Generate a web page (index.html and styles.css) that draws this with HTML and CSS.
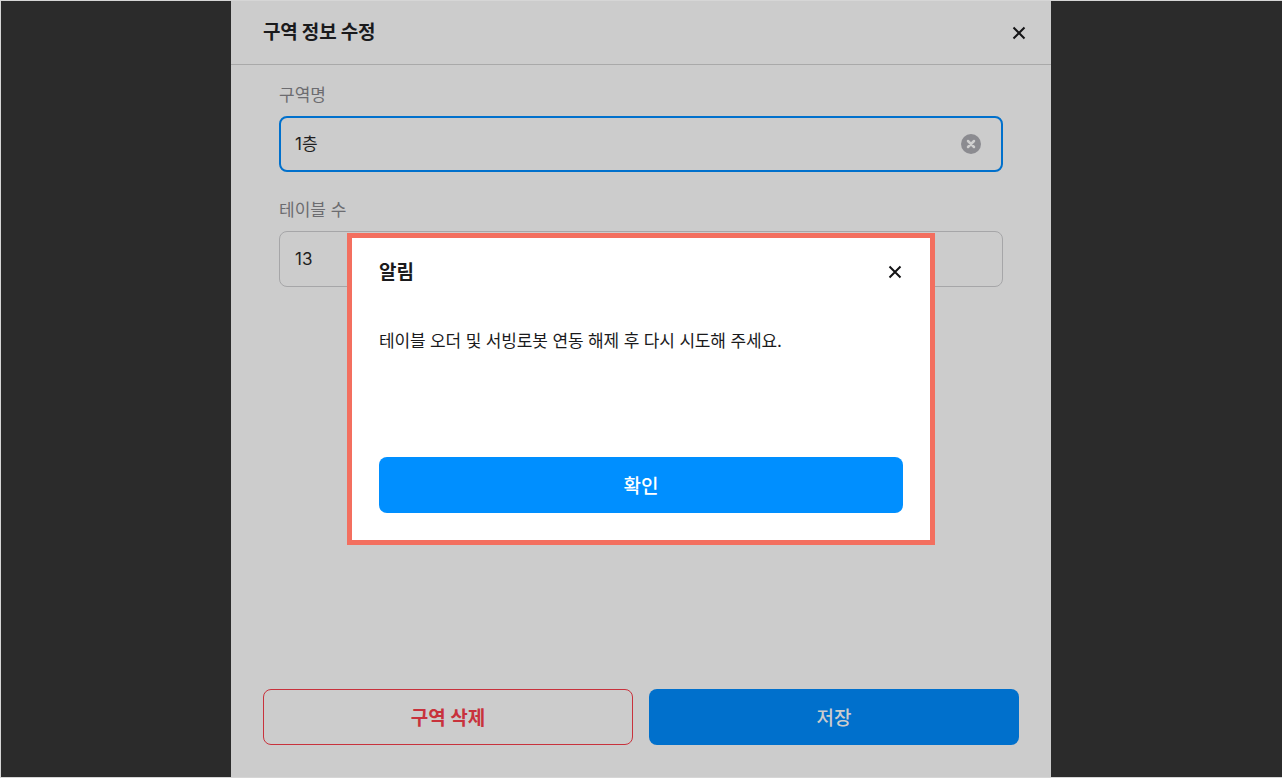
FILE: index.html
```html
<!DOCTYPE html>
<html lang="ko">
<head>
<meta charset="utf-8">
<title>구역 정보 수정</title>
<link rel="stylesheet" href="styles.css">
</head>
<body>
<div class="app">
  <section class="panel">
    <header class="panel-head">
      <h1 class="panel-title">구역 정보 수정</h1>
      <svg class="close-icon" viewBox="0 0 14 14"><path d="M1.5 1.5l11 11M12.5 1.5l-11 11"/></svg>
    </header>
    <div class="panel-body">
      <div class="field">
        <label class="field-label">구역명</label>
        <div class="input input-focus">
          <span class="input-value">1층</span>
          <svg class="clear-icon" viewBox="0 0 20 20"><circle cx="10" cy="10" r="10" fill="#8b8b90"/><path d="M7 7l6 6M13 7l-6 6" stroke="#cfcfcf" stroke-width="2.5" stroke-linecap="round"/></svg>
        </div>
      </div>
      <div class="field">
        <label class="field-label">테이블 수</label>
        <div class="input"><span class="input-value">13</span></div>
      </div>
    </div>
    <footer class="panel-foot">
      <button class="btn btn-danger">구역 삭제</button>
      <button class="btn btn-save">저장</button>
    </footer>
  </section>
  <div class="overlay">
    <div class="dialog">
      <div class="dialog-head">
        <h2 class="dialog-title">알림</h2>
        <svg class="close-icon" viewBox="0 0 14 14"><path d="M1.5 1.5l11 11M12.5 1.5l-11 11"/></svg>
      </div>
      <p class="dialog-text">테이블 오더 및 서빙로봇 연동 해제 후 다시 시도해 주세요.</p>
      <button class="btn btn-ok">확인</button>
    </div>
  </div>
</div>
</body>
</html>
```
FILE: styles.css
```css
* { box-sizing: border-box; }
html, body { margin: 0; height: 100%; }
body {
  font-family: Inter, "Noto Sans CJK KR", sans-serif;
  color: #1a1a1c;
  background: #2b2b2b;
}
.app {
  position: relative;
  height: 100vh;
  display: flex;
  justify-content: center;
  background: #2b2b2b;
  border-top: 1px solid #d6d6d6;
  border-bottom: 1px solid #d6d6d6;
  box-shadow: inset 1px 0 #d6d6d6;
}
.panel {
  width: 820px;
  display: flex;
  flex-direction: column;
  background: #cccccc;
}
.panel-head {
  height: 64px;
  flex: none;
  display: flex;
  align-items: center;
  justify-content: space-between;
  padding: 0 25px 0 32px;
  border-bottom: 1px solid #a9a9a9;
}
.panel-title {
  margin: 0;
  font-size: 19px;
  line-height: 26px;
  font-weight: 700;
  letter-spacing: -0.2px;
}
.close-icon {
  width: 14px;
  height: 14px;
  fill: none;
  stroke: #141416;
  stroke-width: 2;
}
.panel-body {
  padding: 17px 48px 0;
  display: flex;
  flex-direction: column;
  gap: 25px;
}
.field-label {
  display: block;
  font-size: 17px;
  line-height: 26px;
  color: #6c6c70;
  margin-bottom: 8px;
}
.input {
  height: 56px;
  display: flex;
  align-items: center;
  justify-content: space-between;
  padding: 0 15px;
  border: 1px solid #a6a6a8;
  border-radius: 8px;
}
.input-focus {
  border: 2px solid #0070cc;
  padding: 0 20px 0 14px;
}
.input-value {
  font-size: 17px;
  line-height: 24px;
  color: #1f1f21;
}
.clear-icon {
  width: 20px;
  height: 20px;
}
.panel-foot {
  margin-top: auto;
  display: grid;
  grid-template-columns: 1fr 1fr;
  gap: 16px;
  padding: 0 32px 32px;
}
.btn {
  height: 56px;
  border-radius: 8px;
  border: 0;
  font-family: inherit;
  font-size: 19px;
  font-weight: 500;
  padding: 0 0 2px;
}
.btn-danger {
  background: transparent;
  border: 1px solid #c8323c;
  color: #c8323c;
  font-weight: 700;
}
.btn-save {
  background: #0070cc;
  color: #cccccc;
}
.overlay {
  position: absolute;
  inset: 0;
  display: flex;
  align-items: center;
  justify-content: center;
}
.dialog {
  width: 588px;
  height: 312px;
  display: flex;
  flex-direction: column;
  background: #fff;
  border: 5px solid #f36f5f;
  padding: 0 27px 27px;
}
.dialog-head {
  height: 68px;
  flex: none;
  display: flex;
  align-items: center;
  justify-content: space-between;
  padding-right: 1px;
}
.dialog-title {
  margin: 1px 0 0;
  font-size: 19px;
  line-height: 26px;
  font-weight: 700;
}
.dialog-text {
  margin: 23px 0 0;
  font-size: 17px;
  line-height: 24px;
  color: #1a1a1c;
  letter-spacing: -0.15px;
}
.btn-ok {
  margin-top: auto;
  width: 524px;
  background: #008fff;
  color: #fff;
}
```
